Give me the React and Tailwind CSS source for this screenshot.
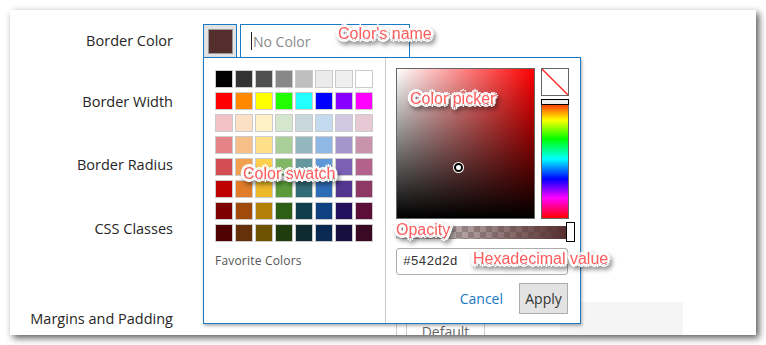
const swatchRows = [
  ['#000000', '#333333', '#505050', '#888888', '#bfbfbf', '#ebebeb', '#efefef', '#ffffff'],
  ['#ff0000', '#ff8800', '#ffff00', '#22ff00', '#22ffff', '#0000ff', '#8800ff', '#ff00ff'],
  ['#f2c2c6', '#fce0c6', '#fff1c6', '#d4e6cd', '#c8d8dd', '#c4daef', '#d1c9e2', '#e6c9d5'],
  ['#e48488', '#f7bf88', '#ffe088', '#aacf99', '#94b7bf', '#90b8e4', '#a595cb', '#c993ae'],
  ['#d44d53', '#f2a050', '#ffd04d', '#81b866', '#65979f', '#5e97d8', '#7a61b5', '#b4628c'],
  ['#be0000', '#e07c2a', '#ecb92a', '#5a9a3a', '#316c78', '#2f6cb8', '#52358f', '#8e3866'],
  ['#7f0000', '#a04b0a', '#b28009', '#2d6014', '#0f3f4c', '#0f4080', '#25105e', '#5b0e38'],
  ['#4f0000', '#66300a', '#6d5200', '#1e3c0e', '#0f2a30', '#0a2a54', '#170f40', '#3a0a25'],
];

const labelCls =
  "w-[163px] shrink-0 text-right text-[14.5px] text-[#262626] font-['Open_Sans',sans-serif]";

function Note({ className, children }) {
  return (
    <div
      className={
        "absolute whitespace-nowrap text-[16px] leading-[18px] text-[#ff5c5c] font-['Liberation_Sans',Arial,sans-serif] [text-shadow:-3px_0_0_#fff,3px_0_0_#fff,0_-3px_0_#fff,0_3px_0_#fff,-2px_-2px_0_#fff,2px_-2px_0_#fff,-2px_2px_0_#fff,2px_2px_0_#fff,0_0_5px_#fff] drop-shadow-[2px_3px_2px_rgba(0,0,0,0.45)] " +
        className
      }
    >
      {children}
    </div>
  );
}

function Row({ label, className = '', children }) {
  return (
    <div className={'flex h-[34px] items-center gap-[30px] ' + className}>
      <div className={labelCls}>{label}</div>
      {children}
    </div>
  );
}

function ColorPopup() {
  return (
    <div className="absolute left-[193px] top-[47px] flex h-[267px] w-[378px] border border-[#1979c3] bg-white shadow-[1px_2px_3px_rgba(0,0,0,0.3)]">
      {/* swatches */}
      <div className="w-[182px] shrink-0 border-r border-[#cccccc] pl-[11px] pt-[12px]">
        <div className="grid grid-cols-[repeat(8,18px)] gap-x-[2px] gap-y-[4px]">
          {swatchRows.flat().map((c, i) => (
            <div key={i} className="h-[18px] w-[18px] border border-[#cccccc]" style={{ backgroundColor: c }} />
          ))}
        </div>
        <div className="mt-[11px] text-[12px] leading-[16px] tracking-[0.2px] text-[#555555] font-['Open_Sans',sans-serif]">
          Favorite Colors
        </div>
      </div>

      {/* picker */}
      <div className="flex flex-1 flex-col pl-[10px] pr-[11px] pt-[10px]">
        <div className="flex gap-[6px]">
          <div className="relative h-[151px] w-[139px] border border-[#666666] bg-[linear-gradient(to_top,#000,rgba(0,0,0,0)),linear-gradient(to_right,#fff,#f00)]">
            <div className="absolute left-[57px] top-[94px] h-[9px] w-[9px] rounded-full border-2 border-black bg-white ring-1 ring-white" />
          </div>
          <div className="flex w-[28px] flex-col gap-[3px]">
            <div className="h-[28px] w-[28px] border border-[#666666] bg-white">
              <svg width="26" height="26" viewBox="0 0 26 26">
                <line x1="0" y1="0" x2="26" y2="26" stroke="#ff2020" strokeWidth="1.3" />
              </svg>
            </div>
            <div className="relative h-[120px] w-[28px] border border-[#666666] bg-[linear-gradient(to_bottom,#f00,#ff0_17%,#0f0_33%,#0ff_50%,#00f_67%,#f0f_83%,#f00)]">
              <div className="absolute left-[-1px] top-[-1px] h-[6px] w-[28px] border border-black bg-[#eeeeee]" />
            </div>
          </div>
        </div>

        <div className="relative mt-[3px] flex h-[20px] w-[172px] items-center">
          <div className="h-[13px] w-full [background-image:linear-gradient(to_right,rgba(84,45,45,0.1),#542d2d),repeating-conic-gradient(#c9c9c9_0_25%,#ffffff_0_50%)] [background-size:100%_100%,12px_12px]" />
          <div className="absolute right-[-7px] top-0 h-[20px] w-[9px] border border-black bg-white" />
        </div>

        <div className="mt-[6px] flex h-[27px] w-[172px] items-center rounded-[3px] border border-[#adadad] pl-[6px] text-[13px] text-[#333333] font-['Liberation_Mono',monospace]">
          #542d2d
        </div>

        <div className="mt-[8px] flex w-[172px] items-center justify-end gap-[16px]">
          <span className="text-[14px] text-[#1979c3] font-['Open_Sans',sans-serif]">Cancel</span>
          <button className="h-[31px] w-[49px] border border-[#adadad] bg-[#e3e3e3] text-[14px] text-[#333333] font-['Open_Sans',sans-serif]">
            Apply
          </button>
        </div>
      </div>
    </div>
  );
}

export default function App() {
  return (
    <div className="h-[345px] w-[766px] bg-white p-[10px]">
      <div className="relative h-[325px] w-[746px] overflow-hidden bg-white pt-[14px] shadow-[3px_3px_7px_rgba(0,0,0,0.65)]">
        <Row label="Border Color">
          <div className="flex items-center gap-[3px]">
            <div className="flex h-[34px] w-[34px] items-center justify-center border border-[#1979c3] bg-[#e2e2e2]">
              <div className="h-[25px] w-[25px] border border-[#9a9a9a] bg-[#542d2d]" />
            </div>
            <div className="flex h-[34px] w-[170px] items-center border border-[#1979c3] pl-[10px]">
              <span className="h-[18px] w-[1px] bg-[#222222]" />
              <span className="ml-[1px] text-[14px] text-[#8a8a8a] font-['Open_Sans',sans-serif]">No Color</span>
            </div>
          </div>
        </Row>
        <Row label="Border Width" className="mt-[27px]" />
        <Row label="Border Radius" className="mt-[29px]" />
        <Row label="CSS Classes" className="mt-[30px]" />
        <Row label="Margins and Padding" className="mt-[56px]">
          <div className="ml-[193px] flex h-[34px] shrink-0 items-end">
            <div className="h-[34px] shrink-0 border-l border-[#cccccc]" />
            <div className="mb-[-12px] ml-[9px] flex h-[34px] w-[79px] shrink-0 items-center justify-center border border-[#cccccc] text-[14px] text-[#666666] font-['Open_Sans',sans-serif]">
              Default
            </div>
            <div className="ml-[75px] h-[34px] w-[123px] shrink-0 self-start bg-[#f5f5f5]" />
          </div>
        </Row>

        <ColorPopup />

        <Note className="left-[328px] top-[15px]">Color's name</Note>
        <Note className="left-[400px] top-[80px]">Color picker</Note>
        <Note className="left-[233px] top-[155px]">Color swatch</Note>
        <Note className="left-[386px] top-[211px]">Opacity</Note>
        <Note className="left-[463px] top-[240px]">Hexadecimal value</Note>
      </div>
    </div>
  );
}
